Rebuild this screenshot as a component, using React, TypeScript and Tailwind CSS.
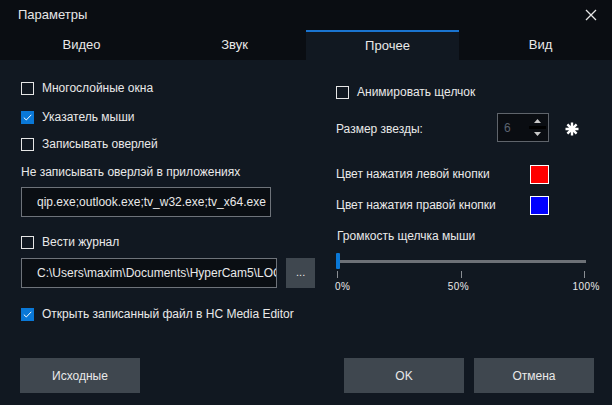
import React from "react";

const font = { fontFamily: '"Liberation Sans", Arial, sans-serif' };

function Check({ checked, label }: { checked?: boolean; label: string }) {
  return (
    <div className="flex items-center h-[20px]">
      {checked ? (
        <div className="w-[13px] h-[13px] bg-[#0a78d7] flex items-center justify-center">
          <svg width="9" height="7" viewBox="0 0 9 7">
            <path d="M0.8 3.6 L3.3 6 L8.3 0.8" fill="none" stroke="#ffffff" strokeWidth="1" />
          </svg>
        </div>
      ) : (
        <div className="w-[13px] h-[13px] border border-[#e6e6e6]" />
      )}
      <span className="ml-[8px] text-[12px] text-[#e9e9e9]">{label}</span>
    </div>
  );
}

export default function App() {
  return (
    <div className="w-[612px] h-[405px] flex flex-col bg-[#111821] text-[#e9e9e9] overflow-hidden" style={font}>
      <div className="h-[30px] bg-[#0a0d12] flex items-center justify-between pl-[18px] pr-[15px]">
        <span className="text-[13px] text-[#e6e6e6]">Параметры</span>
        <svg width="12" height="12" viewBox="0 0 12 12">
          <path d="M1 1 L11 11 M11 1 L1 11" stroke="#e6e6e6" strokeWidth="1.3" />
        </svg>
      </div>
      <div className="h-[30px] bg-[#0a0d12] grid grid-cols-4 text-[13px]">
        <div className="flex items-center justify-center pl-[10px]">Видео</div>
        <div className="flex items-center justify-center pl-[10px]">Звук</div>
        <div className="flex items-center justify-center pl-[10px] bg-[#111821] border-t-2 border-[#1a74d0]">Прочее</div>
        <div className="flex items-center justify-center pl-[10px]">Вид</div>
      </div>
      <div className="flex-1 flex">
        <div className="w-[315px] pl-[21px] pt-[18px] flex flex-col">
          <Check label="Многослойные окна" />
          <div className="mt-[9px]"><Check checked label="Указатель мыши" /></div>
          <div className="mt-[7px]"><Check label="Записывать оверлей" /></div>
          <div className="mt-[8px] h-[20px] flex items-center text-[12px]">Не записывать оверлэй в приложениях</div>
          <div className="mt-[5px] w-[250px] h-[30px] bg-[#0a0e13] border border-[#6e737a] flex items-center pl-[15px] text-[12px] whitespace-nowrap overflow-hidden">
            qip.exe;outlook.exe;tv_w32.exe;tv_x64.exe
          </div>
          <div className="mt-[15px]"><Check label="Вести журнал" /></div>
          <div className="mt-[6px] flex gap-[9px]">
            <div className="w-[258px] h-[30px] bg-[#0a0e13] border border-[#6e737a] flex items-center pl-[15px] pr-[6px] text-[12px] whitespace-nowrap overflow-hidden">
              C:\Users\maxim\Documents\HyperCam5\LOG
            </div>
            <div className="w-[29px] h-[30px] bg-[#3f474f] flex items-center justify-center text-[11px] leading-none pb-[2px]">...</div>
          </div>
          <div className="mt-[16px]"><Check checked label="Открыть записанный файл в HC Media Editor" /></div>
        </div>
        <div className="flex-1 pl-[21px] pt-[22px] flex flex-col">
          <Check label="Анимировать щелчок" />
          <div className="mt-[11px] h-[29px] flex items-center">
            <span className="w-[161px] text-[12px] pt-[3px]">Размер звезды:</span>
            <div className="w-[52px] h-[29px] border border-[#5f646b] bg-[#0a0d12] flex items-center relative">
              <span className="ml-[6px] text-[12px] text-[#5c6470]">6</span>
              <div className="absolute right-[1px] top-0 h-full w-[19px] flex flex-col items-center justify-center">
                <svg width="7" height="4" viewBox="0 0 7 4"><path d="M0 4 L3.5 0 L7 4 Z" fill="#c9c9c9" /></svg>
                <div className="w-[17px] h-[3px] bg-[#000000] my-[3px]" />
                <svg width="7" height="4" viewBox="0 0 7 4"><path d="M0 0 L3.5 4 L7 0 Z" fill="#c9c9c9" /></svg>
              </div>
            </div>
            <svg className="ml-[16px] mt-[2px]" width="14" height="14" viewBox="0 0 14 14">
              <path d="M7 0.5 V13.5 M0.5 7 H13.5 M2.4 2.4 L11.6 11.6 M11.6 2.4 L2.4 11.6" stroke="#ffffff" strokeWidth="2.4" />
            </svg>
          </div>
          <div className="mt-[22px] h-[20px] flex items-center">
            <span className="w-[194px] text-[12px]">Цвет нажатия левой кнопки</span>
            <div className="w-[19px] h-[19px] bg-[#ff0000] border border-[#ffffff]" />
          </div>
          <div className="mt-[11px] h-[20px] flex items-center">
            <span className="w-[194px] text-[12px]">Цвет нажатия правой кнопки</span>
            <div className="w-[19px] h-[19px] bg-[#0000ff] border border-[#ffffff]" />
          </div>
          <div className="mt-[11px] h-[20px] flex items-center text-[12px] pl-[1px]">Громкость щелчка мыши</div>
          <div className="mt-[7px] w-[250px] h-[16px] relative flex items-center">
            <div className="absolute left-[1px] right-0 h-[3px] bg-[#6d7177]" />
            <div className="absolute left-0 w-[4px] h-[16px] bg-[#0a78d7] rounded-[1px]" />
          </div>
          <div className="mt-[2px] w-[250px] h-[7px] flex justify-between px-[1px]">
            <div className="w-[1px] h-full bg-[#8a8e94]" />
            <div className="w-[1px] h-full bg-[#8a8e94]" />
            <div className="w-[1px] h-full bg-[#8a8e94]" />
          </div>
          <div className="mt-[3px] w-[264px] h-[12px] flex justify-between text-[10px] leading-[12px] tracking-[0.5px]">
            <span className="-ml-[1px]">0%</span>
            <span className="-ml-[6px]">50%</span>
            <span>100%</span>
          </div>
        </div>
      </div>
      <div className="h-[47px] flex pl-[20px] pr-[18px] pb-[12px]">
        <div className="w-[120px] h-[35px] bg-[#3f474f] flex items-center justify-center text-[12px]">Исходные</div>
        <div className="flex-1" />
        <div className="w-[120px] h-[35px] bg-[#3f474f] flex items-center justify-center text-[12px]">OK</div>
        <div className="ml-[10px] w-[120px] h-[35px] bg-[#3f474f] flex items-center justify-center text-[12px]">Отмена</div>
      </div>
    </div>
  );
}
